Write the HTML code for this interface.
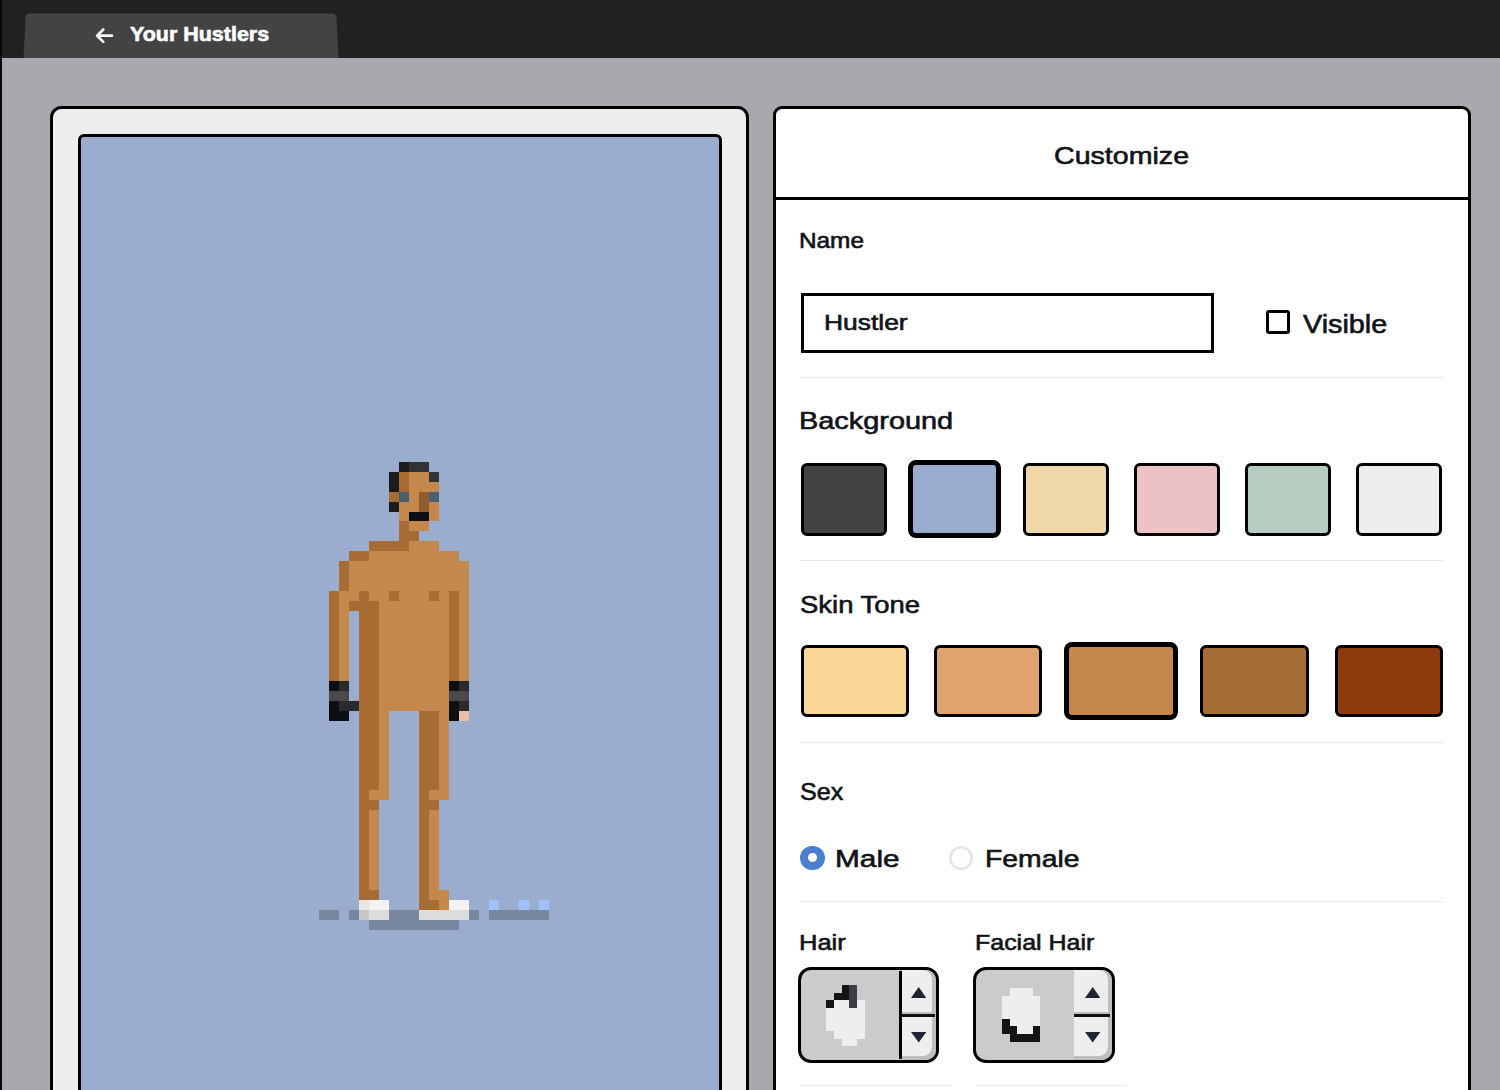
<!DOCTYPE html>
<html><head><meta charset="utf-8">
<style>
html,body{margin:0;padding:0;}
body{width:1500px;height:1090px;overflow:hidden;position:relative;background:#a8a9ae;font-family:"Liberation Sans",sans-serif;font-weight:normal;color:#111318;}
.abs{position:absolute;}
#topbar{left:0;top:0;width:1500px;height:57.5px;background:#202221;}
#lstripe{left:0;top:0;width:2px;height:1090px;background:#0a0a0a;}
#tab{left:22.5px;top:12.5px;width:316px;height:45px;}
.t{position:absolute;white-space:nowrap;line-height:1;transform-origin:0 0;-webkit-text-stroke:0.6px currentColor;}
#lpanel{left:50.2px;top:106.3px;width:698.5px;height:1100px;box-sizing:border-box;border:3px solid #000;border-radius:11.5px;background:#eceeed;}
#bluep{left:77.7px;top:134px;width:644px;height:1100px;box-sizing:border-box;border:3px solid #000;border-radius:6px;background:#9aadce;overflow:hidden;}
#rpanel{left:773px;top:106.3px;width:697.5px;height:1100px;box-sizing:border-box;border:3px solid #000;border-radius:9px;background:#fff;}
.hdiv{position:absolute;left:773px;width:697px;top:197px;height:3px;background:#000;}
.sep{position:absolute;height:1px;background:#e8e8e8;}
.sw{position:absolute;box-sizing:border-box;border:3px solid #000;border-radius:6px;}
.sw.sel{border-width:5px;border-radius:8px;}
</style></head>
<body>
<div id="topbar" class="abs"></div>
<svg id="tab" class="abs" width="316" height="45" viewBox="0 0 316 45">
<path d="M2.5 5 Q2.8 0.5 7 0.5 L309 0.5 Q313.3 0.5 313.5 5 L315.5 45 L0.5 45 Z" fill="#434345"/>
</svg>
<div id="lstripe" class="abs"></div>

<!-- tab content -->
<svg class="abs" style="left:88px;top:20px" width="32" height="30" viewBox="0 0 32 30"><path d="M24 15.7 H9.4 M15.3 9.5 L9.1 15.7 L15.3 21.9" stroke="#f6f6f6" stroke-width="2.7" fill="none" stroke-linecap="round" stroke-linejoin="round"/></svg>
<div class="t" style="left:129.76px;top:24.46px;font-size:20.29px;color:#fff;font-weight:bold;transform:scaleX(1.0583)">Your Hustlers</div>

<div id="lpanel" class="abs"></div>
<div id="bluep" class="abs"></div>
<!--SPRITE--><svg class="abs" style="left:80px;top:143.1px" width="638.1" height="796.8" viewBox="0 0 64 80" preserveAspectRatio="none" shape-rendering="crispEdges"><rect x="32" y="32" width="1" height="1" fill="#1c1c1c"/><rect x="33" y="32" width="2" height="1" fill="#333333"/><rect x="31" y="33" width="1" height="1" fill="#1c1c1c"/><rect x="32" y="33" width="1" height="1" fill="#a66c34"/><rect x="33" y="33" width="2" height="1" fill="#c4884c"/><rect x="35" y="33" width="1" height="1" fill="#333333"/><rect x="31" y="34" width="1" height="1" fill="#1c1c1c"/><rect x="32" y="34" width="1" height="1" fill="#a66c34"/><rect x="33" y="34" width="3" height="1" fill="#c4884c"/><rect x="31" y="35" width="1" height="1" fill="#a66c34"/><rect x="32" y="35" width="1" height="1" fill="#4a6070"/><rect x="33" y="35" width="1" height="1" fill="#c4884c"/><rect x="34" y="35" width="1" height="1" fill="#8e5c2e"/><rect x="35" y="35" width="1" height="1" fill="#4a6070"/><rect x="31" y="36" width="1" height="1" fill="#1c1c1c"/><rect x="32" y="36" width="2" height="1" fill="#c4884c"/><rect x="34" y="36" width="1" height="1" fill="#8e5c2e"/><rect x="35" y="36" width="1" height="1" fill="#c4884c"/><rect x="32" y="37" width="1" height="1" fill="#c4884c"/><rect x="33" y="37" width="2" height="1" fill="#0c1014"/><rect x="35" y="37" width="1" height="1" fill="#c4884c"/><rect x="32" y="38" width="1" height="1" fill="#a66c34"/><rect x="33" y="38" width="2" height="1" fill="#c4884c"/><rect x="32" y="39" width="2" height="1" fill="#a66c34"/><rect x="29" y="40" width="4" height="1" fill="#a66c34"/><rect x="33" y="40" width="3" height="1" fill="#c4884c"/><rect x="27" y="41" width="2" height="1" fill="#a66c34"/><rect x="29" y="41" width="9" height="1" fill="#c4884c"/><rect x="26" y="42" width="1" height="1" fill="#a66c34"/><rect x="27" y="42" width="12" height="1" fill="#c4884c"/><rect x="26" y="43" width="1" height="1" fill="#a66c34"/><rect x="27" y="43" width="12" height="1" fill="#c4884c"/><rect x="26" y="44" width="1" height="1" fill="#a66c34"/><rect x="27" y="44" width="12" height="1" fill="#c4884c"/><rect x="25" y="45" width="1" height="1" fill="#a66c34"/><rect x="26" y="45" width="2" height="1" fill="#c4884c"/><rect x="28" y="45" width="1" height="1" fill="#a66c34"/><rect x="29" y="45" width="2" height="1" fill="#c4884c"/><rect x="31" y="45" width="1" height="1" fill="#a66c34"/><rect x="32" y="45" width="3" height="1" fill="#c4884c"/><rect x="35" y="45" width="1" height="1" fill="#a66c34"/><rect x="36" y="45" width="1" height="1" fill="#c4884c"/><rect x="37" y="45" width="1" height="1" fill="#a66c34"/><rect x="38" y="45" width="1" height="1" fill="#c4884c"/><rect x="25" y="46" width="1" height="1" fill="#a66c34"/><rect x="26" y="46" width="1" height="1" fill="#c4884c"/><rect x="27" y="46" width="3" height="1" fill="#a66c34"/><rect x="30" y="46" width="7" height="1" fill="#c4884c"/><rect x="37" y="46" width="1" height="1" fill="#a66c34"/><rect x="38" y="46" width="1" height="1" fill="#c4884c"/><rect x="25" y="47" width="1" height="1" fill="#a66c34"/><rect x="26" y="47" width="1" height="1" fill="#c4884c"/><rect x="28" y="47" width="2" height="1" fill="#a66c34"/><rect x="30" y="47" width="7" height="1" fill="#c4884c"/><rect x="37" y="47" width="1" height="1" fill="#a66c34"/><rect x="38" y="47" width="1" height="1" fill="#c4884c"/><rect x="25" y="48" width="1" height="1" fill="#a66c34"/><rect x="26" y="48" width="1" height="1" fill="#c4884c"/><rect x="28" y="48" width="2" height="1" fill="#a66c34"/><rect x="30" y="48" width="7" height="1" fill="#c4884c"/><rect x="37" y="48" width="1" height="1" fill="#a66c34"/><rect x="38" y="48" width="1" height="1" fill="#c4884c"/><rect x="25" y="49" width="1" height="1" fill="#a66c34"/><rect x="26" y="49" width="1" height="1" fill="#c4884c"/><rect x="28" y="49" width="2" height="1" fill="#a66c34"/><rect x="30" y="49" width="7" height="1" fill="#c4884c"/><rect x="37" y="49" width="1" height="1" fill="#a66c34"/><rect x="38" y="49" width="1" height="1" fill="#c4884c"/><rect x="25" y="50" width="1" height="1" fill="#a66c34"/><rect x="26" y="50" width="1" height="1" fill="#c4884c"/><rect x="28" y="50" width="2" height="1" fill="#a66c34"/><rect x="30" y="50" width="7" height="1" fill="#c4884c"/><rect x="37" y="50" width="1" height="1" fill="#a66c34"/><rect x="38" y="50" width="1" height="1" fill="#c4884c"/><rect x="25" y="51" width="1" height="1" fill="#a66c34"/><rect x="26" y="51" width="1" height="1" fill="#c4884c"/><rect x="28" y="51" width="2" height="1" fill="#a66c34"/><rect x="30" y="51" width="7" height="1" fill="#c4884c"/><rect x="37" y="51" width="1" height="1" fill="#a66c34"/><rect x="38" y="51" width="1" height="1" fill="#c4884c"/><rect x="25" y="52" width="1" height="1" fill="#a66c34"/><rect x="26" y="52" width="1" height="1" fill="#c4884c"/><rect x="28" y="52" width="2" height="1" fill="#a66c34"/><rect x="30" y="52" width="7" height="1" fill="#c4884c"/><rect x="37" y="52" width="1" height="1" fill="#a66c34"/><rect x="38" y="52" width="1" height="1" fill="#c4884c"/><rect x="25" y="53" width="1" height="1" fill="#a66c34"/><rect x="26" y="53" width="1" height="1" fill="#c4884c"/><rect x="28" y="53" width="2" height="1" fill="#a66c34"/><rect x="30" y="53" width="7" height="1" fill="#c4884c"/><rect x="37" y="53" width="1" height="1" fill="#a66c34"/><rect x="38" y="53" width="1" height="1" fill="#c4884c"/><rect x="25" y="54" width="1" height="1" fill="#0c1014"/><rect x="26" y="54" width="1" height="1" fill="#2a2a2a"/><rect x="28" y="54" width="2" height="1" fill="#a66c34"/><rect x="30" y="54" width="7" height="1" fill="#c4884c"/><rect x="37" y="54" width="1" height="1" fill="#0c1014"/><rect x="38" y="54" width="1" height="1" fill="#2a2a2a"/><rect x="25" y="55" width="2" height="1" fill="#4a4a4a"/><rect x="28" y="55" width="2" height="1" fill="#a66c34"/><rect x="30" y="55" width="7" height="1" fill="#c4884c"/><rect x="37" y="55" width="2" height="1" fill="#4a4a4a"/><rect x="25" y="56" width="1" height="1" fill="#0c1014"/><rect x="26" y="56" width="2" height="1" fill="#2a2a2a"/><rect x="28" y="56" width="2" height="1" fill="#a66c34"/><rect x="30" y="56" width="7" height="1" fill="#c4884c"/><rect x="37" y="56" width="1" height="1" fill="#0c1014"/><rect x="38" y="56" width="1" height="1" fill="#2a2a2a"/><rect x="25" y="57" width="2" height="1" fill="#0c1014"/><rect x="28" y="57" width="2" height="1" fill="#a66c34"/><rect x="30" y="57" width="1" height="1" fill="#c4884c"/><rect x="34" y="57" width="2" height="1" fill="#a66c34"/><rect x="36" y="57" width="1" height="1" fill="#c4884c"/><rect x="37" y="57" width="1" height="1" fill="#0c1014"/><rect x="38" y="57" width="1" height="1" fill="#efbcaa"/><rect x="28" y="58" width="2" height="1" fill="#a66c34"/><rect x="30" y="58" width="1" height="1" fill="#c4884c"/><rect x="34" y="58" width="2" height="1" fill="#a66c34"/><rect x="36" y="58" width="1" height="1" fill="#c4884c"/><rect x="28" y="59" width="2" height="1" fill="#a66c34"/><rect x="30" y="59" width="1" height="1" fill="#c4884c"/><rect x="34" y="59" width="2" height="1" fill="#a66c34"/><rect x="36" y="59" width="1" height="1" fill="#c4884c"/><rect x="28" y="60" width="2" height="1" fill="#a66c34"/><rect x="30" y="60" width="1" height="1" fill="#c4884c"/><rect x="34" y="60" width="2" height="1" fill="#a66c34"/><rect x="36" y="60" width="1" height="1" fill="#c4884c"/><rect x="28" y="61" width="2" height="1" fill="#a66c34"/><rect x="30" y="61" width="1" height="1" fill="#c4884c"/><rect x="34" y="61" width="2" height="1" fill="#a66c34"/><rect x="36" y="61" width="1" height="1" fill="#c4884c"/><rect x="28" y="62" width="2" height="1" fill="#a66c34"/><rect x="30" y="62" width="1" height="1" fill="#c4884c"/><rect x="34" y="62" width="2" height="1" fill="#a66c34"/><rect x="36" y="62" width="1" height="1" fill="#c4884c"/><rect x="28" y="63" width="2" height="1" fill="#a66c34"/><rect x="30" y="63" width="1" height="1" fill="#c4884c"/><rect x="34" y="63" width="2" height="1" fill="#a66c34"/><rect x="36" y="63" width="1" height="1" fill="#c4884c"/><rect x="28" y="64" width="2" height="1" fill="#a66c34"/><rect x="30" y="64" width="1" height="1" fill="#c4884c"/><rect x="34" y="64" width="2" height="1" fill="#a66c34"/><rect x="36" y="64" width="1" height="1" fill="#c4884c"/><rect x="28" y="65" width="1" height="1" fill="#a66c34"/><rect x="29" y="65" width="2" height="1" fill="#c4884c"/><rect x="34" y="65" width="1" height="1" fill="#a66c34"/><rect x="35" y="65" width="2" height="1" fill="#c4884c"/><rect x="28" y="66" width="2" height="1" fill="#a66c34"/><rect x="34" y="66" width="2" height="1" fill="#a66c34"/><rect x="28" y="67" width="1" height="1" fill="#a66c34"/><rect x="29" y="67" width="1" height="1" fill="#c4884c"/><rect x="34" y="67" width="1" height="1" fill="#a66c34"/><rect x="35" y="67" width="1" height="1" fill="#c4884c"/><rect x="28" y="68" width="1" height="1" fill="#a66c34"/><rect x="29" y="68" width="1" height="1" fill="#c4884c"/><rect x="34" y="68" width="1" height="1" fill="#a66c34"/><rect x="35" y="68" width="1" height="1" fill="#c4884c"/><rect x="28" y="69" width="1" height="1" fill="#a66c34"/><rect x="29" y="69" width="1" height="1" fill="#c4884c"/><rect x="34" y="69" width="1" height="1" fill="#a66c34"/><rect x="35" y="69" width="1" height="1" fill="#c4884c"/><rect x="28" y="70" width="1" height="1" fill="#a66c34"/><rect x="29" y="70" width="1" height="1" fill="#c4884c"/><rect x="34" y="70" width="1" height="1" fill="#a66c34"/><rect x="35" y="70" width="1" height="1" fill="#c4884c"/><rect x="28" y="71" width="1" height="1" fill="#a66c34"/><rect x="29" y="71" width="1" height="1" fill="#c4884c"/><rect x="34" y="71" width="1" height="1" fill="#a66c34"/><rect x="35" y="71" width="1" height="1" fill="#c4884c"/><rect x="28" y="72" width="1" height="1" fill="#a66c34"/><rect x="29" y="72" width="1" height="1" fill="#c4884c"/><rect x="34" y="72" width="1" height="1" fill="#a66c34"/><rect x="35" y="72" width="1" height="1" fill="#c4884c"/><rect x="28" y="73" width="1" height="1" fill="#a66c34"/><rect x="29" y="73" width="1" height="1" fill="#c4884c"/><rect x="34" y="73" width="1" height="1" fill="#a66c34"/><rect x="35" y="73" width="1" height="1" fill="#c4884c"/><rect x="28" y="74" width="1" height="1" fill="#a66c34"/><rect x="29" y="74" width="1" height="1" fill="#c4884c"/><rect x="34" y="74" width="1" height="1" fill="#a66c34"/><rect x="35" y="74" width="1" height="1" fill="#c4884c"/><rect x="28" y="75" width="2" height="1" fill="#a66c34"/><rect x="34" y="75" width="1" height="1" fill="#a66c34"/><rect x="35" y="75" width="2" height="1" fill="#c4884c"/><rect x="28" y="76" width="1" height="1" fill="#e6e6e6"/><rect x="29" y="76" width="2" height="1" fill="#f2f2f2"/><rect x="34" y="76" width="2" height="1" fill="#a66c34"/><rect x="36" y="76" width="1" height="1" fill="#c4884c"/><rect x="37" y="76" width="2" height="1" fill="#f2f2f2"/><rect x="41" y="76" width="1" height="1" fill="#a0c0ff"/><rect x="44" y="76" width="1" height="1" fill="#a0c0ff"/><rect x="46" y="76" width="1" height="1" fill="#a0c0ff"/><rect x="24" y="77" width="2" height="1" fill="#7886a0"/><rect x="27" y="77" width="1" height="1" fill="#7886a0"/><rect x="28" y="77" width="1" height="1" fill="#c8c8c8"/><rect x="29" y="77" width="2" height="1" fill="#dcdcdc"/><rect x="31" y="77" width="3" height="1" fill="#7886a0"/><rect x="34" y="77" width="5" height="1" fill="#dcdcdc"/><rect x="39" y="77" width="1" height="1" fill="#7886a0"/><rect x="41" y="77" width="6" height="1" fill="#7886a0"/><rect x="29" y="78" width="9" height="1" fill="#7886a0"/></svg><!--/SPRITE-->

<div id="rpanel" class="abs"></div>
<div class="hdiv"></div>


<!-- right content -->
<div class="t" style="left:1054.17px;top:144.39px;font-size:24.14px;transform:scaleX(1.1853)">Customize</div>
<div class="t" style="left:799.30px;top:230.63px;font-size:21.51px;transform:scaleX(1.1324)">Name</div>
<div class="abs" style="left:800.5px;top:292.5px;width:413px;height:60px;box-sizing:border-box;border:3px solid #000;background:#fff;"></div>
<div class="t" style="left:823.67px;top:311.57px;font-size:22.19px;transform:scaleX(1.1904)">Hustler</div>
<div class="abs" style="left:1266px;top:310.2px;width:24px;height:24px;box-sizing:border-box;border:3px solid #000;border-radius:3px;background:#fff;"></div>
<div class="t" style="left:1303.48px;top:311.62px;font-size:24.95px;transform:scaleX(1.1543)">Visible</div>
<div class="sep" style="left:800px;top:377px;width:643px;"></div>

<div class="t" style="left:799.18px;top:410.00px;font-size:23.46px;transform:scaleX(1.2314)">Background</div>
<div class="sw" style="left:800.6px;top:463.3px;width:86.4px;height:72.4px;background:#434343"></div>
<div class="sw sel" style="left:907.7px;top:460.4px;width:93.5px;height:78.1px;background:#9aadce"></div>
<div class="sw" style="left:1022.8px;top:463.3px;width:86.4px;height:72.4px;background:#efd7a7"></div>
<div class="sw" style="left:1133.6px;top:463.3px;width:86.4px;height:72.4px;background:#ecc2c4"></div>
<div class="sw" style="left:1245px;top:463.3px;width:86.4px;height:72.4px;background:#b7cbc1"></div>
<div class="sw" style="left:1356px;top:463.3px;width:86.4px;height:72.4px;background:#eceeed"></div>
<div class="sep" style="left:800px;top:560px;width:643px;"></div>

<div class="t" style="left:799.93px;top:593.06px;font-size:24.82px;transform:scaleX(1.1068)">Skin Tone</div>
<div class="sw" style="left:800.6px;top:645px;width:108.2px;height:72px;background:#fbd898"></div>
<div class="sw" style="left:934.1px;top:645px;width:108.2px;height:72px;background:#e0a46e"></div>
<div class="sw sel" style="left:1063.7px;top:641.9px;width:114.2px;height:77.9px;background:#c4884c"></div>
<div class="sw" style="left:1199.8px;top:645px;width:109.5px;height:72px;background:#a66c36"></div>
<div class="sw" style="left:1334.5px;top:645px;width:108.2px;height:72px;background:#8f3a0c"></div>
<div class="sep" style="left:800px;top:742px;width:643px;"></div>

<div class="t" style="left:800.36px;top:780.22px;font-size:24.32px;transform:scaleX(1.0333)">Sex</div>
<div class="abs" style="left:800.3px;top:845.6px;width:24.3px;height:24.2px;border-radius:50%;background:#4a7fd0;"></div>
<div class="abs" style="left:807.7px;top:852.9px;width:9.6px;height:9.6px;border-radius:50%;background:#fff;"></div>
<div class="t" style="left:834.85px;top:847.26px;font-size:24.44px;transform:scaleX(1.2191)">Male</div>
<svg class="abs" style="left:948.9px;top:845.9px" width="24.1" height="24" viewBox="0 0 24.1 24"><ellipse cx="12.05" cy="12" rx="10.75" ry="10.7" fill="#fff" stroke="#dfe4ee" stroke-width="2.6"/></svg>
<div class="t" style="left:984.67px;top:847.26px;font-size:24.44px;transform:scaleX(1.1605)">Female</div>
<div class="sep" style="left:800px;top:901px;width:643px;"></div>

<div class="t" style="left:799.00px;top:932.16px;font-size:21.90px;transform:scaleX(1.1645)">Hair</div>
<div class="t" style="left:975.02px;top:932.16px;font-size:21.90px;transform:scaleX(1.1401)">Facial Hair</div>
<div class="sep" style="left:801px;top:1085px;width:150px;"></div>
<div class="sep" style="left:976px;top:1085px;width:150px;"></div>

<!-- steppers -->
<div class="abs" style="left:797.5px;top:966.8px;width:141.8px;height:96.4px;box-sizing:border-box;border:3px solid #000;border-radius:13px;background:#cbcbcb;overflow:hidden;">
<div class="abs" style="left:98.2px;top:1.2px;width:3.3px;height:87.6px;background:#000"></div>
<div class="abs" style="left:101.5px;top:0;width:40px;height:100px;background:#bebebe"></div>
<div class="abs" style="left:101.5px;top:0;width:30.4px;height:42.3px;background:#eeeeee;border-top-right-radius:9px"></div>
<div class="abs" style="left:101.5px;top:44.7px;width:32.5px;height:2.5px;background:#111"></div>
<div class="abs" style="left:101.5px;top:47.2px;width:30.4px;height:39px;background:#eeeeee;border-bottom-right-radius:9px"></div>
</div>
<svg class="abs" style="left:910.7px;top:987.2px" width="15.4" height="11" viewBox="0 0 15.4 11"><path d="M7.7 0 L15.4 11 L0 11 Z" fill="#1e2535"/></svg>
<svg class="abs" style="left:910.7px;top:1032.1px" width="15.4" height="10.6" viewBox="0 0 15.4 10.6"><path d="M0 0 L15.4 0 L7.7 10.6 Z" fill="#1e2535"/></svg>
<svg class="abs" style="left:826.3px;top:984.7px" width="38.9" height="61.2" viewBox="0 0 5 8" shape-rendering="crispEdges"><rect x="2" y="0" width="1" height="1" fill="#141414"/><rect x="3" y="0" width="1" height="1" fill="#3c3e44"/><rect x="1" y="1" width="2" height="1" fill="#141414"/><rect x="3" y="1" width="1" height="1" fill="#3c3e44"/><rect x="0" y="2" width="1" height="1" fill="#141414"/><rect x="1" y="2" width="2" height="1" fill="#eeeeee"/><rect x="3" y="2" width="1" height="1" fill="#3c3e44"/><rect x="4" y="2" width="1" height="1" fill="#eeeeee"/><rect x="0" y="3" width="5" height="1" fill="#eeeeee"/><rect x="0" y="4" width="5" height="1" fill="#eeeeee"/><rect x="0" y="5" width="5" height="1" fill="#eeeeee"/><rect x="1" y="6" width="4" height="1" fill="#eeeeee"/><rect x="2" y="7" width="2" height="1" fill="#eeeeee"/></svg>
<div class="abs" style="left:973.0px;top:966.8px;width:141.6px;height:96.4px;box-sizing:border-box;border:3px solid #000;border-radius:13px;background:#cbcbcb;overflow:hidden;">
<div class="abs" style="left:98px;top:0;width:40px;height:100px;background:#bebebe"></div>
<div class="abs" style="left:98px;top:0;width:33.9px;height:42.3px;background:#eeeeee;border-top-right-radius:9px"></div>
<div class="abs" style="left:98px;top:44.7px;width:35.9px;height:2.5px;background:#111"></div>
<div class="abs" style="left:98px;top:47.2px;width:33.9px;height:39px;background:#eeeeee;border-bottom-right-radius:9px"></div>
</div>
<svg class="abs" style="left:1084.6px;top:987.2px" width="15.4" height="11" viewBox="0 0 15.4 11"><path d="M7.7 0 L15.4 11 L0 11 Z" fill="#1e2535"/></svg>
<svg class="abs" style="left:1084.6px;top:1032.1px" width="15.4" height="10.6" viewBox="0 0 15.4 10.6"><path d="M0 0 L15.4 0 L7.7 10.6 Z" fill="#1e2535"/></svg>
<svg class="abs" style="left:1002.3px;top:988.3px" width="38.5" height="53.5" viewBox="0 0 5 7" shape-rendering="crispEdges"><rect x="1" y="0" width="3" height="1" fill="#eeeeee"/><rect x="0" y="1" width="5" height="1" fill="#eeeeee"/><rect x="0" y="2" width="5" height="1" fill="#eeeeee"/><rect x="0" y="3" width="5" height="1" fill="#eeeeee"/><rect x="0" y="4" width="1" height="1" fill="#141414"/><rect x="1" y="4" width="4" height="1" fill="#eeeeee"/><rect x="0" y="5" width="2" height="1" fill="#141414"/><rect x="2" y="5" width="2" height="1" fill="#eeeeee"/><rect x="4" y="5" width="1" height="1" fill="#141414"/><rect x="1" y="6" width="4" height="1" fill="#141414"/></svg>
</body></html>
